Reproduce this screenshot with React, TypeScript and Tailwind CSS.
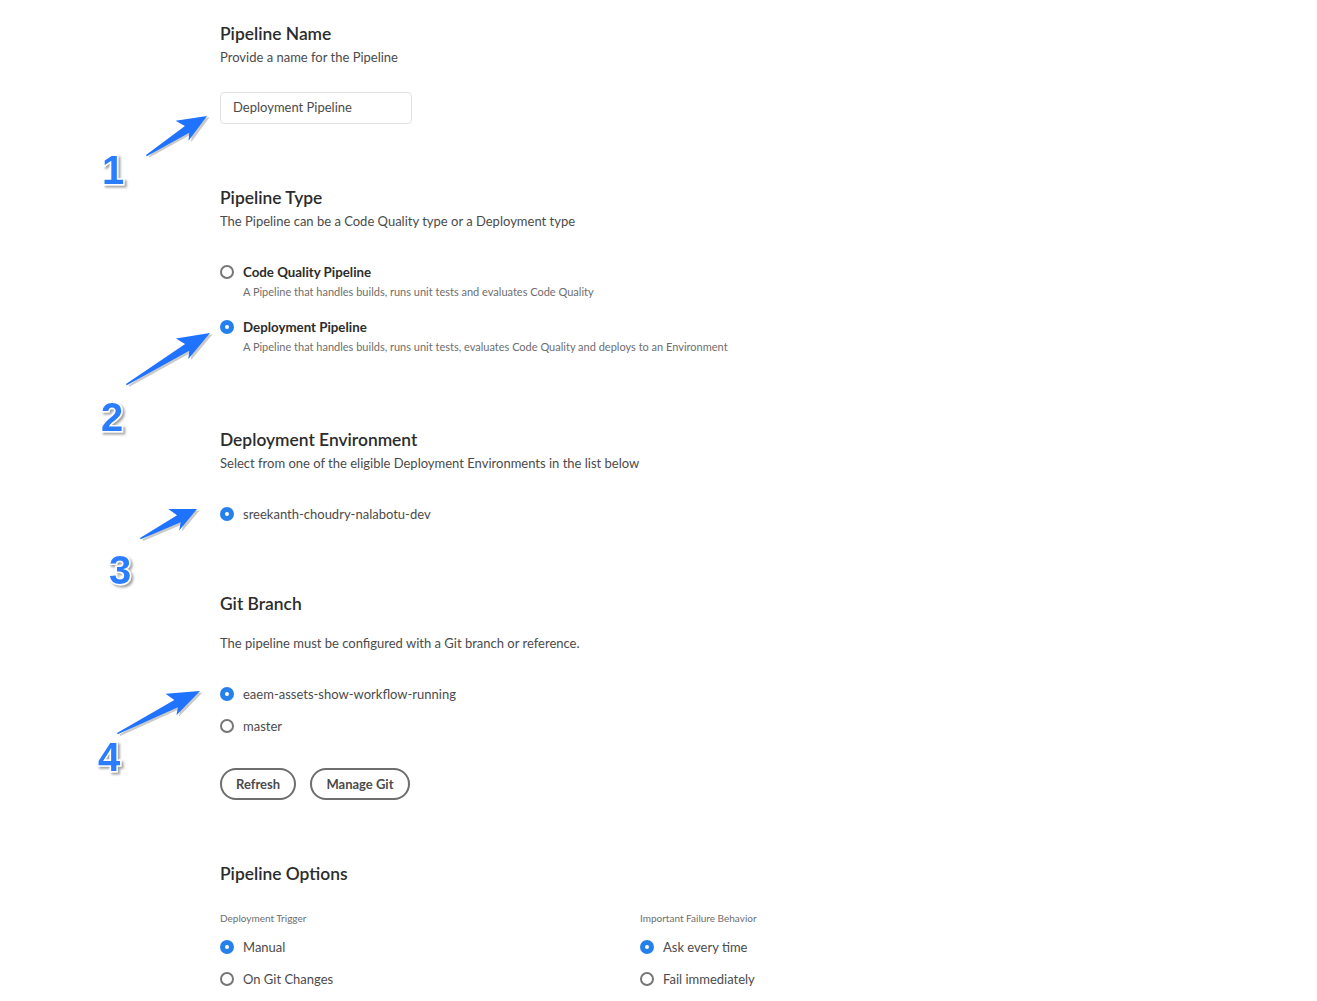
import type { ReactNode } from "react";

const font = { fontFamily: "Lato, 'Open Sans', sans-serif" };

function Dot({ checked }: { checked?: boolean }) {
  return (
    <span
      className={
        checked
          ? "h-[14px] w-[14px] shrink-0 rounded-full border-[5px] border-[#2680eb] bg-white"
          : "h-[14px] w-[14px] shrink-0 rounded-full border-2 border-[#767676] bg-white"
      }
    />
  );
}

function Radio({ checked, children }: { checked?: boolean; children: ReactNode }) {
  return (
    <div className="flex h-5 items-center gap-[9px]">
      <Dot checked={checked} />
      <span className="pt-[2px] text-[13px] text-[#4b4b4b]">{children}</span>
    </div>
  );
}

function OptionRadio({ checked, title, desc }: { checked?: boolean; title: string; desc: string }) {
  return (
    <div>
      <div className="flex h-5 items-center gap-[9px]">
        <Dot checked={checked} />
        <span className="pt-[2px] text-[13.3px] font-bold text-[#2c2c2c]">{title}</span>
      </div>
      <p className="mt-[2px] pl-[23px] text-[11px] leading-4 text-[#6e6e6e]">{desc}</p>
    </div>
  );
}

function Heading({ children }: { children: ReactNode }) {
  return <h2 className="h-6 text-[17.4px] font-semibold leading-6 text-[#2c2c2c]">{children}</h2>;
}

function Sub({ children }: { children: ReactNode }) {
  return <p className="h-5 text-[13px] leading-5 text-[#4b4b4b]">{children}</p>;
}

function Arrow({ x1, y1, x2, y2 }: { x1: number; y1: number; x2: number; y2: number }) {
  const dx = x2 - x1;
  const dy = y2 - y1;
  const len = Math.sqrt(dx * dx + dy * dy);
  const ang = (Math.atan2(dy, dx) * 180) / Math.PI;
  const h = Math.min(32, len * 0.4);
  const pts = [
    [0, 0],
    [len - h + 5, -3.5],
    [len - h, -13],
    [len, 0],
    [len - h, 11],
    [len - h + 5, 4.5],
    [0, 1.5],
  ]
    .map((p) => p.join(","))
    .join(" ");
  return (
    <g transform={`translate(${x1} ${y1}) rotate(${ang})`}>
      <polygon points={pts} fill="#8a8a8a" opacity="0.45" transform="translate(1.5 2.5)" />
      <polygon points={pts} fill="#1f73ff" />
    </g>
  );
}

function Num({ x, y, n }: { x: number; y: number; n: string }) {
  return (
    <text
      x={x}
      y={y}
      fontSize="40"
      fontWeight="700"
      textAnchor="middle"
      fill="#2a7dff"
      stroke="#ffffff"
      strokeWidth="3"
      paintOrder="stroke"
      filter="url(#numShadow)"
      style={{ fontFamily: "'Liberation Sans', Arial, sans-serif" }}
    >
      {n}
    </text>
  );
}

export default function App() {
  return (
    <div className="relative min-h-[1001px] w-full overflow-hidden bg-white" style={font}>
      <div className="flex flex-col pl-[220px] pt-[22px]">
        <Heading>Pipeline Name</Heading>
        <div className="mt-[1px]">
          <Sub>Provide a name for the Pipeline</Sub>
        </div>
        <div className="mt-[25px] flex h-[32px] w-[192px] items-center rounded-[4px] border border-[#e1e1e1] px-3 text-[13px] text-[#4b4b4b]">
          Deployment Pipeline
        </div>

        <div className="mt-[62px]">
          <Heading>Pipeline Type</Heading>
        </div>
        <div className="mt-[1px]">
          <Sub>The Pipeline can be a Code Quality type or a Deployment type</Sub>
        </div>
        <div className="mt-[31px] flex flex-col gap-[17px]">
          <OptionRadio
            title="Code Quality Pipeline"
            desc="A Pipeline that handles builds, runs unit tests and evaluates Code Quality"
          />
          <OptionRadio
            checked
            title="Deployment Pipeline"
            desc="A Pipeline that handles builds, runs unit tests, evaluates Code Quality and deploys to an Environment"
          />
        </div>

        <div className="mt-[73px]">
          <Heading>Deployment Environment</Heading>
        </div>
        <div className="mt-[1px]">
          <Sub>Select from one of the eligible Deployment Environments in the list below</Sub>
        </div>
        <div className="mt-[31px]">
          <Radio checked>sreekanth-choudry-nalabotu-dev</Radio>
        </div>

        <div className="mt-[68px]">
          <Heading>Git Branch</Heading>
        </div>
        <div className="mt-[17px]">
          <Sub>The pipeline must be configured with a Git branch or reference.</Sub>
        </div>
        <div className="mt-[31px] flex flex-col gap-[12px]">
          <Radio checked>eaem-assets-show-workflow-running</Radio>
          <Radio>master</Radio>
        </div>
        <div className="mt-[32px] flex gap-[14px]">
          <button className="h-[32px] w-[76px] rounded-full border-2 border-[#6e6e6e] pt-[1px] text-[13px] font-bold text-[#4b4b4b]">
            Refresh
          </button>
          <button className="h-[32px] w-[100px] rounded-full border-2 border-[#6e6e6e] pt-[1px] text-[13px] font-bold text-[#4b4b4b]">
            Manage Git
          </button>
        </div>

        <div className="mt-[62px]">
          <Heading>Pipeline Options</Heading>
        </div>
        <div className="mt-[25px] grid w-[620px] grid-cols-[420px_200px]">
          <div className="flex flex-col">
            <p className="h-[14px] text-[10px] leading-[14px] text-[#6e6e6e]">Deployment Trigger</p>
            <div className="mt-[12px] flex flex-col gap-[12px]">
              <Radio checked>Manual</Radio>
              <Radio>On Git Changes</Radio>
            </div>
          </div>
          <div className="flex flex-col">
            <p className="h-[14px] text-[10px] leading-[14px] text-[#6e6e6e]">Important Failure Behavior</p>
            <div className="mt-[12px] flex flex-col gap-[12px]">
              <Radio checked>Ask every time</Radio>
              <Radio>Fail immediately</Radio>
            </div>
          </div>
        </div>
      </div>

      <svg className="pointer-events-none absolute left-0 top-0" width="300" height="1001">
        <defs>
          <filter id="numShadow" x="-30%" y="-30%" width="170%" height="170%">
            <feDropShadow dx="2" dy="2" stdDeviation="1.2" floodColor="#555555" floodOpacity="0.55" />
          </filter>
        </defs>
        <Arrow x1={146} y1={155} x2={207} y2={116} />
        <Arrow x1={126} y1={384} x2={210} y2={333} />
        <Arrow x1={140} y1={538} x2={197} y2={509} />
        <Arrow x1={117} y1={733} x2={200} y2={691} />
        <Num x={113} y={184} n="1" />
        <Num x={112} y={431} n="2" />
        <Num x={120} y={584} n="3" />
        <Num x={109} y={771} n="4" />
      </svg>
    </div>
  );
}
